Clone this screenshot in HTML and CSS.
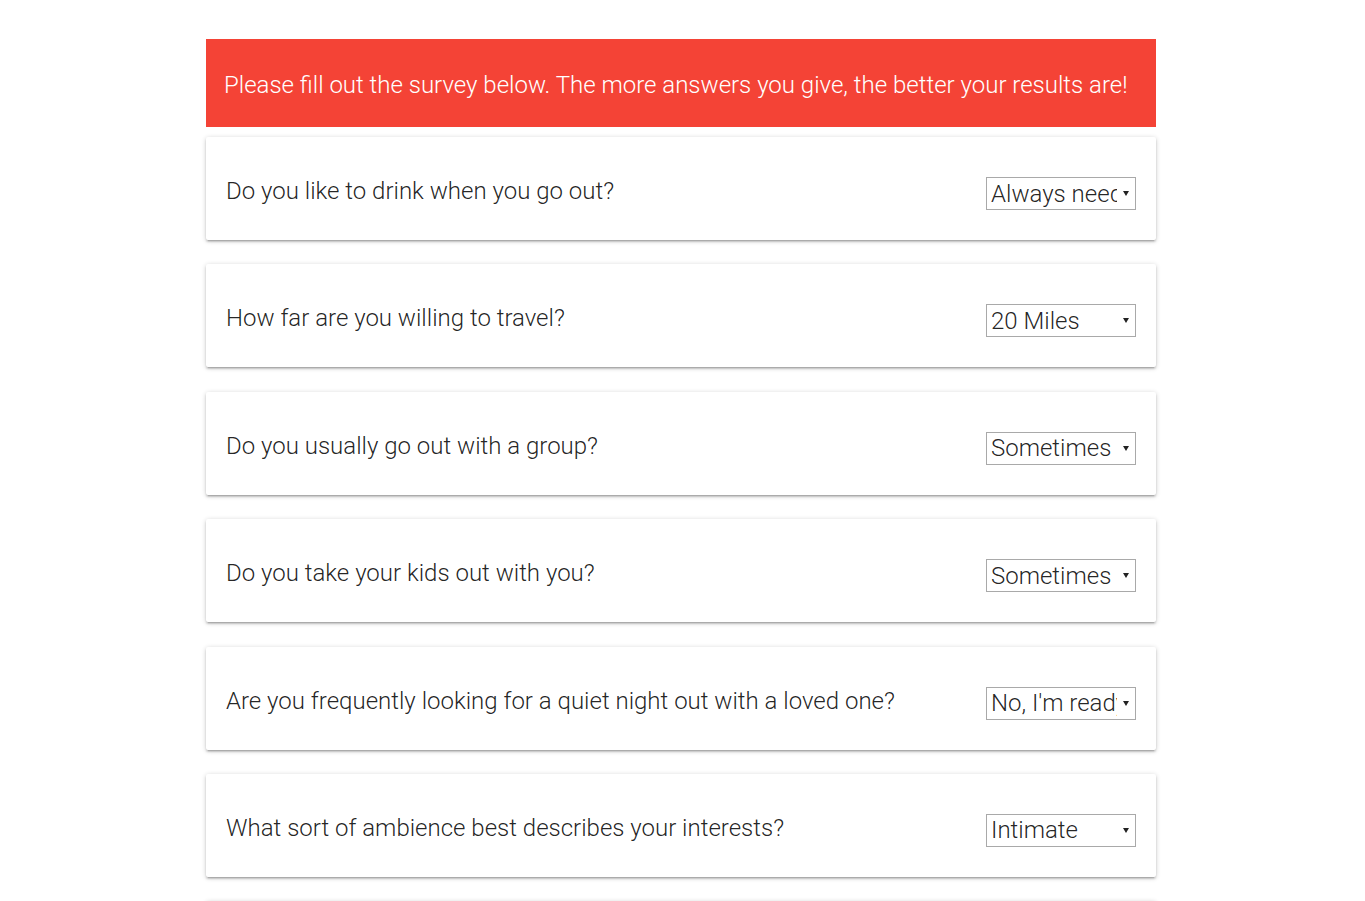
FILE: index.html
```html
<!DOCTYPE html>
<html lang="en">
<head>
<meta charset="utf-8">
<title>Survey</title>
<link rel="stylesheet" href="styles.css">
</head>
<body>
<main class="survey">
  <div class="banner">Please fill out the survey below. The more answers you give, the better your results are!</div>

  <div class="card">
    <label class="question" for="q1">Do you like to drink when you go out?</label>
    <div class="select-wrap">
      <select id="q1" class="answer">
        <option>Always need a drink</option>
        <option>Sometimes</option>
        <option>Never</option>
      </select>
    </div>
  </div>

  <div class="card">
    <label class="question" for="q2">How far are you willing to travel?</label>
    <div class="select-wrap">
      <select id="q2" class="answer">
        <option>20 Miles</option>
        <option>5 Miles</option>
        <option>10 Miles</option>
      </select>
    </div>
  </div>

  <div class="card">
    <label class="question" for="q3">Do you usually go out with a group?</label>
    <div class="select-wrap">
      <select id="q3" class="answer">
        <option>Sometimes</option>
        <option>Always</option>
        <option>Never</option>
      </select>
    </div>
  </div>

  <div class="card">
    <label class="question" for="q4">Do you take your kids out with you?</label>
    <div class="select-wrap">
      <select id="q4" class="answer">
        <option>Sometimes</option>
        <option>Always</option>
        <option>Never</option>
      </select>
    </div>
  </div>

  <div class="card">
    <label class="question" for="q5">Are you frequently looking for a quiet night out with a loved one?</label>
    <div class="select-wrap">
      <select id="q5" class="answer">
        <option>No, I'm ready to party</option>
        <option>Yes</option>
        <option>Sometimes</option>
      </select>
    </div>
  </div>

  <div class="card">
    <label class="question" for="q6">What sort of ambience best describes your interests?</label>
    <div class="select-wrap">
      <select id="q6" class="answer">
        <option>Intimate</option>
        <option>Lively</option>
        <option>Casual</option>
      </select>
    </div>
  </div>

  <div class="card card-partial"></div>
</main>
</body>
</html>
```

FILE: styles.css
```css
html, body {
  margin: 0;
  padding: 0;
  background: #ffffff;
}

body {
  font-family: Roboto, "Liberation Sans", sans-serif;
  font-weight: 300;
  color: rgba(0, 0, 0, 0.87);
}

.survey {
  width: 950px;
  margin: 39px 0 0 calc(50% - 476.5px);
  display: flex;
  flex-direction: column;
}

.banner {
  background: #f44336;
  color: #ffffff;
  font-size: 24px;
  line-height: 33px;
  padding: 30px 18px 25px;
  margin-bottom: 10px;
}

.card {
  background: #ffffff;
  border-radius: 2px;
  box-shadow: 0 2px 2px 0 rgba(0, 0, 0, 0.14),
              0 3px 1px -2px rgba(0, 0, 0, 0.12),
              0 1px 5px 0 rgba(0, 0, 0, 0.2);
  padding: 37px 20px 30px;
  margin-bottom: 24.4px;
  display: flex;
  align-items: flex-start;
  justify-content: space-between;
}

.card-partial {
  height: 36px;
}

.question {
  font-size: 24px;
  line-height: 33px;
  padding-top: 1px;
  margin-bottom: -1px;
}

.select-wrap {
  position: relative;
  margin-top: 3px;
  width: 150px;
  height: 33px;
}

.select-wrap::after {
  content: "";
  position: absolute;
  right: 7px;
  top: 14px;
  border-left: 3px solid transparent;
  border-right: 3px solid transparent;
  border-top: 5px solid #222;
  pointer-events: none;
}

.answer {
  appearance: none;
  -webkit-appearance: none;
  box-sizing: border-box;
  width: 150px;
  height: 33px;
  margin: 0;
  padding: 0 18px 0 4px;
  border: 1px solid #a9a9a9;
  border-radius: 0;
  background: #ffffff;
  font-family: Roboto, "Liberation Sans", sans-serif;
  font-weight: 300;
  font-size: 24px;
  color: rgba(0, 0, 0, 0.87);
  outline: none;
}
```
